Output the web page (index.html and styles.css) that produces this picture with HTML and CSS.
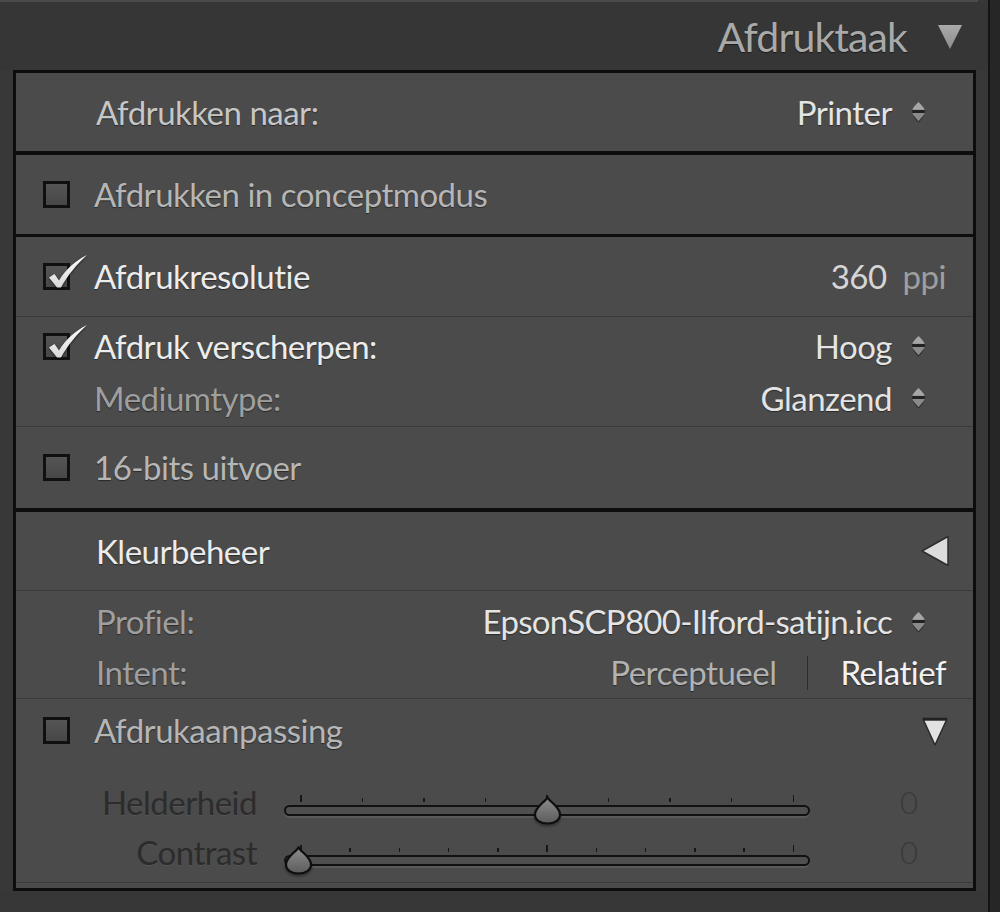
FILE: index.html
```html
<!DOCTYPE html>
<html lang="nl">
<head>
<meta charset="utf-8">
<title>Afdruktaak</title>
<link rel="stylesheet" href="styles.css">
</head>
<body>
<div class="app">
  <div class="main">
    <div class="topline"></div>
    <header class="head">
      <span class="title">Afdruktaak</span>
      <svg class="head-tri" width="26" height="26" viewBox="0 0 26 26"><defs><linearGradient id="hg" x1="0" y1="0" x2="0" y2="1"><stop offset="0" stop-color="#aaaaaa"/><stop offset="1" stop-color="#8c8c8c"/></linearGradient></defs><polygon points="1,1 25,1 13,25" fill="url(#hg)"/></svg>
    </header>

    <div class="panel">
      <section class="sec">
        <div class="row r78 plain">
          <span class="label mid">Afdrukken naar:</span>
          <span class="select"><span class="val">Printer</span><svg class="stepper" width="15" height="22" viewBox="0 0 14 21"><path d="M7 1 C9 3 12 6 13 8.5 H1 C2 6 5 3 7 1Z" fill="#a6a6a6"/><rect x="1" y="8.5" width="12" height="3" fill="#222"/><path d="M1 11.5 H13 C12 14 9 17 7 19 C5 17 2 14 1 11.5Z" fill="#8a8a8a"/><path d="M1.5 13 C3 15.5 5 17.5 7 20 C9 17.5 11 15.5 12.5 13 C11.5 16 9 18.5 7 20.5 C5 18.5 2.5 16 1.5 13Z" fill="#181818"/></svg></span>
        </div>
      </section>

      <section class="sec black">
        <div class="row r79">
          <span class="cb"></span>
          <span class="label dim">Afdrukken in conceptmodus</span>
        </div>
      </section>

      <section class="sec black b3">
        <div class="row r79">
          <span class="cb on"><svg class="check" width="44" height="40" viewBox="0 0 44 40"><defs><linearGradient id="cg" x1="0" y1="0" x2="0" y2="1"><stop offset="0" stop-color="#ffffff"/><stop offset="1" stop-color="#d8d8d8"/></linearGradient></defs><path d="M4 27.5 L9.5 24 L14 30.5 C21 19 30 11 42 5 C32 14 22.5 25.5 16 37.5 L12 37.5 Z" fill="url(#cg)"/></svg></span>
          <span class="label bright">Afdrukresolutie</span>
          <span class="res"><span class="num">360</span><span class="unit">ppi</span></span>
        </div>
        <div class="sep"></div>
        <div class="group g-sharp">
          <div class="line">
            <span class="cb on"><svg class="check" width="44" height="40" viewBox="0 0 44 40"><path d="M4 27.5 L9.5 24 L14 30.5 C21 19 30 11 42 5 C32 14 22.5 25.5 16 37.5 L12 37.5 Z" fill="url(#cg)"/></svg></span>
            <span class="label bright">Afdruk verscherpen:</span>
            <span class="select"><span class="val">Hoog</span><svg class="stepper" width="15" height="22" viewBox="0 0 14 21"><path d="M7 1 C9 3 12 6 13 8.5 H1 C2 6 5 3 7 1Z" fill="#a6a6a6"/><rect x="1" y="8.5" width="12" height="3" fill="#222"/><path d="M1 11.5 H13 C12 14 9 17 7 19 C5 17 2 14 1 11.5Z" fill="#8a8a8a"/><path d="M1.5 13 C3 15.5 5 17.5 7 20 C9 17.5 11 15.5 12.5 13 C11.5 16 9 18.5 7 20.5 C5 18.5 2.5 16 1.5 13Z" fill="#181818"/></svg></span>
          </div>
          <div class="line">
            <span class="cb-space"></span>
            <span class="label faint">Mediumtype:</span>
            <span class="select"><span class="val">Glanzend</span><svg class="stepper" width="15" height="22" viewBox="0 0 14 21"><path d="M7 1 C9 3 12 6 13 8.5 H1 C2 6 5 3 7 1Z" fill="#a6a6a6"/><rect x="1" y="8.5" width="12" height="3" fill="#222"/><path d="M1 11.5 H13 C12 14 9 17 7 19 C5 17 2 14 1 11.5Z" fill="#8a8a8a"/><path d="M1.5 13 C3 15.5 5 17.5 7 20 C9 17.5 11 15.5 12.5 13 C11.5 16 9 18.5 7 20.5 C5 18.5 2.5 16 1.5 13Z" fill="#181818"/></svg></span>
          </div>
        </div>
        <div class="sep"></div>
        <div class="row r81">
          <span class="cb"></span>
          <span class="label dim">16-bits uitvoer</span>
        </div>
      </section>

      <section class="sec black">
        <div class="row r78 plain">
          <span class="label bright">Kleurbeheer</span>
          <svg class="left-tri" width="30" height="32" viewBox="0 0 30 32"><polygon points="28,1.5 28,30.5 2,16" fill="#dcdcdc" stroke="#2e2e2e" stroke-width="1.5" stroke-linejoin="round"/></svg>
        </div>
        <div class="sep"></div>
        <div class="group g-color plain">
          <div class="line">
            <span class="label faint">Profiel:</span>
            <span class="select"><span class="val">EpsonSCP800-Ilford-satijn.icc</span><svg class="stepper" width="15" height="22" viewBox="0 0 14 21"><path d="M7 1 C9 3 12 6 13 8.5 H1 C2 6 5 3 7 1Z" fill="#a6a6a6"/><rect x="1" y="8.5" width="12" height="3" fill="#222"/><path d="M1 11.5 H13 C12 14 9 17 7 19 C5 17 2 14 1 11.5Z" fill="#8a8a8a"/><path d="M1.5 13 C3 15.5 5 17.5 7 20 C9 17.5 11 15.5 12.5 13 C11.5 16 9 18.5 7 20.5 C5 18.5 2.5 16 1.5 13Z" fill="#181818"/></svg></span>
          </div>
          <div class="line">
            <span class="label faint">Intent:</span>
            <span class="intent"><span class="opt">Perceptueel</span><span class="divider"></span><span class="opt sel">Relatief</span></span>
          </div>
        </div>
        <div class="sep"></div>
        <div class="group g-adj">
          <div class="line">
            <span class="cb"></span>
            <span class="label dim">Afdrukaanpassing</span>
            <svg class="down-tri" width="28" height="30" viewBox="0 0 28 30"><polygon points="2,2 26,2 14,28" fill="#e2e2e2" stroke="#2a2a2a" stroke-width="1.5" stroke-linejoin="round"/><line x1="2" y1="2.2" x2="26" y2="2.2" stroke="#222" stroke-width="3"/></svg>
          </div>
          <div class="slider-row">
            <span class="s-label">Helderheid</span>
            <div class="track">
              <div class="ticks"><i class="tall"></i><i></i><i></i><i></i><i class="tall"></i><i></i><i></i><i></i><i class="tall"></i></div>
              <div class="rail"></div>
              <svg class="thumb" style="left: 249px" width="29" height="29" viewBox="0 0 29 29"><defs><linearGradient id="tg" x1="0" y1="0" x2="0" y2="1"><stop offset="0" stop-color="#8c8c8c"/><stop offset="1" stop-color="#5c5c5c"/></linearGradient></defs><path d="M14.5 1.5 C17 6 27 11 27 18.5 C27 24 21.5 27.5 14.5 27.5 C7.5 27.5 2 24 2 18.5 C2 11 12 6 14.5 1.5Z" fill="url(#tg)" stroke="#0e0e0e" stroke-width="2.2"/></svg>
            </div>
            <span class="s-val">0</span>
          </div>
          <div class="slider-row">
            <span class="s-label">Contrast</span>
            <div class="track">
              <div class="ticks"><i class="tall"></i><i></i><i></i><i></i><i></i><i class="tall"></i><i></i><i></i><i></i><i></i><i class="tall"></i></div>
              <div class="rail"></div>
              <svg class="thumb" style="left: 0px" width="29" height="29" viewBox="0 0 29 29"><path d="M14.5 1.5 C17 6 27 11 27 18.5 C27 24 21.5 27.5 14.5 27.5 C7.5 27.5 2 24 2 18.5 C2 11 12 6 14.5 1.5Z" fill="url(#tg)" stroke="#0e0e0e" stroke-width="2.2"/></svg>
            </div>
            <span class="s-val">0</span>
          </div>
        </div>
        <div class="sep"></div>
        <div class="foot"></div>
      </section>
    </div>
    <div class="bottom"></div>
  </div>
  <div class="scroll"></div>
</div>
</body>
</html>
```

FILE: styles.css
```css
* { box-sizing: border-box; }

body {
  margin: 0;
  background: #2a2a2a;
  font-family: Lato, "Open Sans", "DejaVu Sans", sans-serif;
}

.app {
  display: flex;
  width: 1000px;
  height: 912px;
}

.main {
  width: 988px;
  display: flex;
  flex-direction: column;
  background: #383838;
}

.scroll {
  width: 12px;
  background: #262626;
  border-left: 2px solid #141414;
}

.topline {
  height: 2px;
  background: #4a4a4a;
  margin-right: 10px;
}

.head {
  height: 68px;
  display: flex;
  align-items: center;
  justify-content: flex-end;
  gap: 30px;
  padding-right: 25px;
  background: #363636;
}

.title {
  font-size: 41px;
  line-height: 1;
  letter-spacing: -0.9px;
  color: #a9a9a9;
  text-shadow: 0 1px 1px rgba(0, 0, 0, 0.5);
}

.head-tri { margin-top: 2px; }

.panel {
  margin-left: 13px;
  width: 963px;
  border: 3px solid #0d0d0d;
  background: #4b4b4b;
}

.sec.black { border-top: 4px solid #0d0d0d; }
.sec.black.b3 { border-top-width: 3px; }

.sep {
  height: 1px;
  background: #3b3b3b;
}

.row, .line {
  display: flex;
  align-items: center;
  padding: 0 27px;
}

.plain { padding-left: 80px; }
.plain .line { padding-left: 0; }
.g-color { padding-right: 27px; }
.g-color .line { padding-right: 0; }

.r78 { height: 78px; }
.r79 { height: 79px; }
.r81 { height: 81px; }

.group { display: flex; flex-direction: column; }
.g-sharp { height: 109px; padding-top: 3px; }
.g-sharp .line { height: 52px; }
.g-color { height: 107px; padding-top: 5px; }
.g-color .line { height: 51px; }
.g-adj { height: 183px; padding-top: 5px; }
.g-adj > .line { height: 52px; margin-bottom: 21px; }

.foot { height: 5px; }

.label, .val, .opt, .res, .s-label {
  font-size: 33px;
  line-height: 1;
  letter-spacing: -0.5px;
  white-space: nowrap;
}

.label {
  text-shadow: 0 1px 1px rgba(0, 0, 0, 0.45);
}
.mid { color: #c6c6c6; }
.dim { color: #b6b6b6; }
.bright { color: #ececec; }
.faint { color: #9f9f9f; }

.cb {
  position: relative;
  width: 27px;
  height: 27px;
  flex: none;
  margin-right: 24px;
  border: 3px solid #101010;
  background: linear-gradient(#555, #474747);
}
.cb-space { width: 27px; flex: none; margin-right: 24px; }

.check {
  position: absolute;
  left: -1px;
  top: -16px;
  filter: drop-shadow(0 1px 1px rgba(0,0,0,0.6));
}

.select {
  margin-left: auto;
  margin-right: 20px;
  display: flex;
  align-items: center;
  gap: 19px;
}
.val {
  color: #e4e4e4;
  text-shadow: 0 1px 1px rgba(0, 0, 0, 0.45);
}
.g-color .val { letter-spacing: -0.7px; }

.res {
  margin-left: auto;
  display: flex;
  align-items: baseline;
  gap: 16px;
}
.num { color: #d6d6d6; }
.unit { color: #9e9e9e; }

.left-tri { margin-left: auto; margin-right: -4px; }
.down-tri { margin-left: auto; margin-right: -3px; margin-top: 4px; }

.intent {
  margin-left: auto;
  display: flex;
  align-items: center;
}
.opt {
  color: #b2b2b2;
  text-shadow: 0 1px 1px rgba(0, 0, 0, 0.45);
}
.opt.sel { color: #f2f2f2; }
.divider {
  width: 1px;
  height: 34px;
  background: #2c2c2c;
  margin: 0 32px 0 31px;
}

.slider-row {
  display: flex;
  align-items: center;
  height: 50px;
}
.s-label {
  width: 241px;
  text-align: right;
  color: #2c2c2c;
  text-shadow: 0 1px 0 rgba(255, 255, 255, 0.06);
}
.track {
  position: relative;
  width: 526px;
  margin-left: 27px;
  margin-top: 6px;
}
.ticks {
  display: flex;
  justify-content: space-between;
  align-items: flex-end;
  padding: 0 16px;
  height: 8px;
  margin-bottom: 3px;
}
.ticks i {
  display: block;
  width: 1.5px;
  height: 4px;
  background: #161616;
}
.ticks i.tall { height: 7px; }
.rail {
  height: 11px;
  border: 2px solid #111;
  border-top-width: 2.5px;
  border-radius: 6px;
  background: #4f4f4f;
  box-shadow: 0 2px 0 #5a5a5a;
}
.thumb {
  position: absolute;
  top: 2px;
  filter: drop-shadow(0 2px 1px rgba(0,0,0,0.35));
}
.s-val {
  width: 108px;
  text-align: right;
  font-size: 31px;
  line-height: 1;
  color: #393939;
  font-weight: 300;
}

.bottom { flex: 1; background: #373737; }
```
